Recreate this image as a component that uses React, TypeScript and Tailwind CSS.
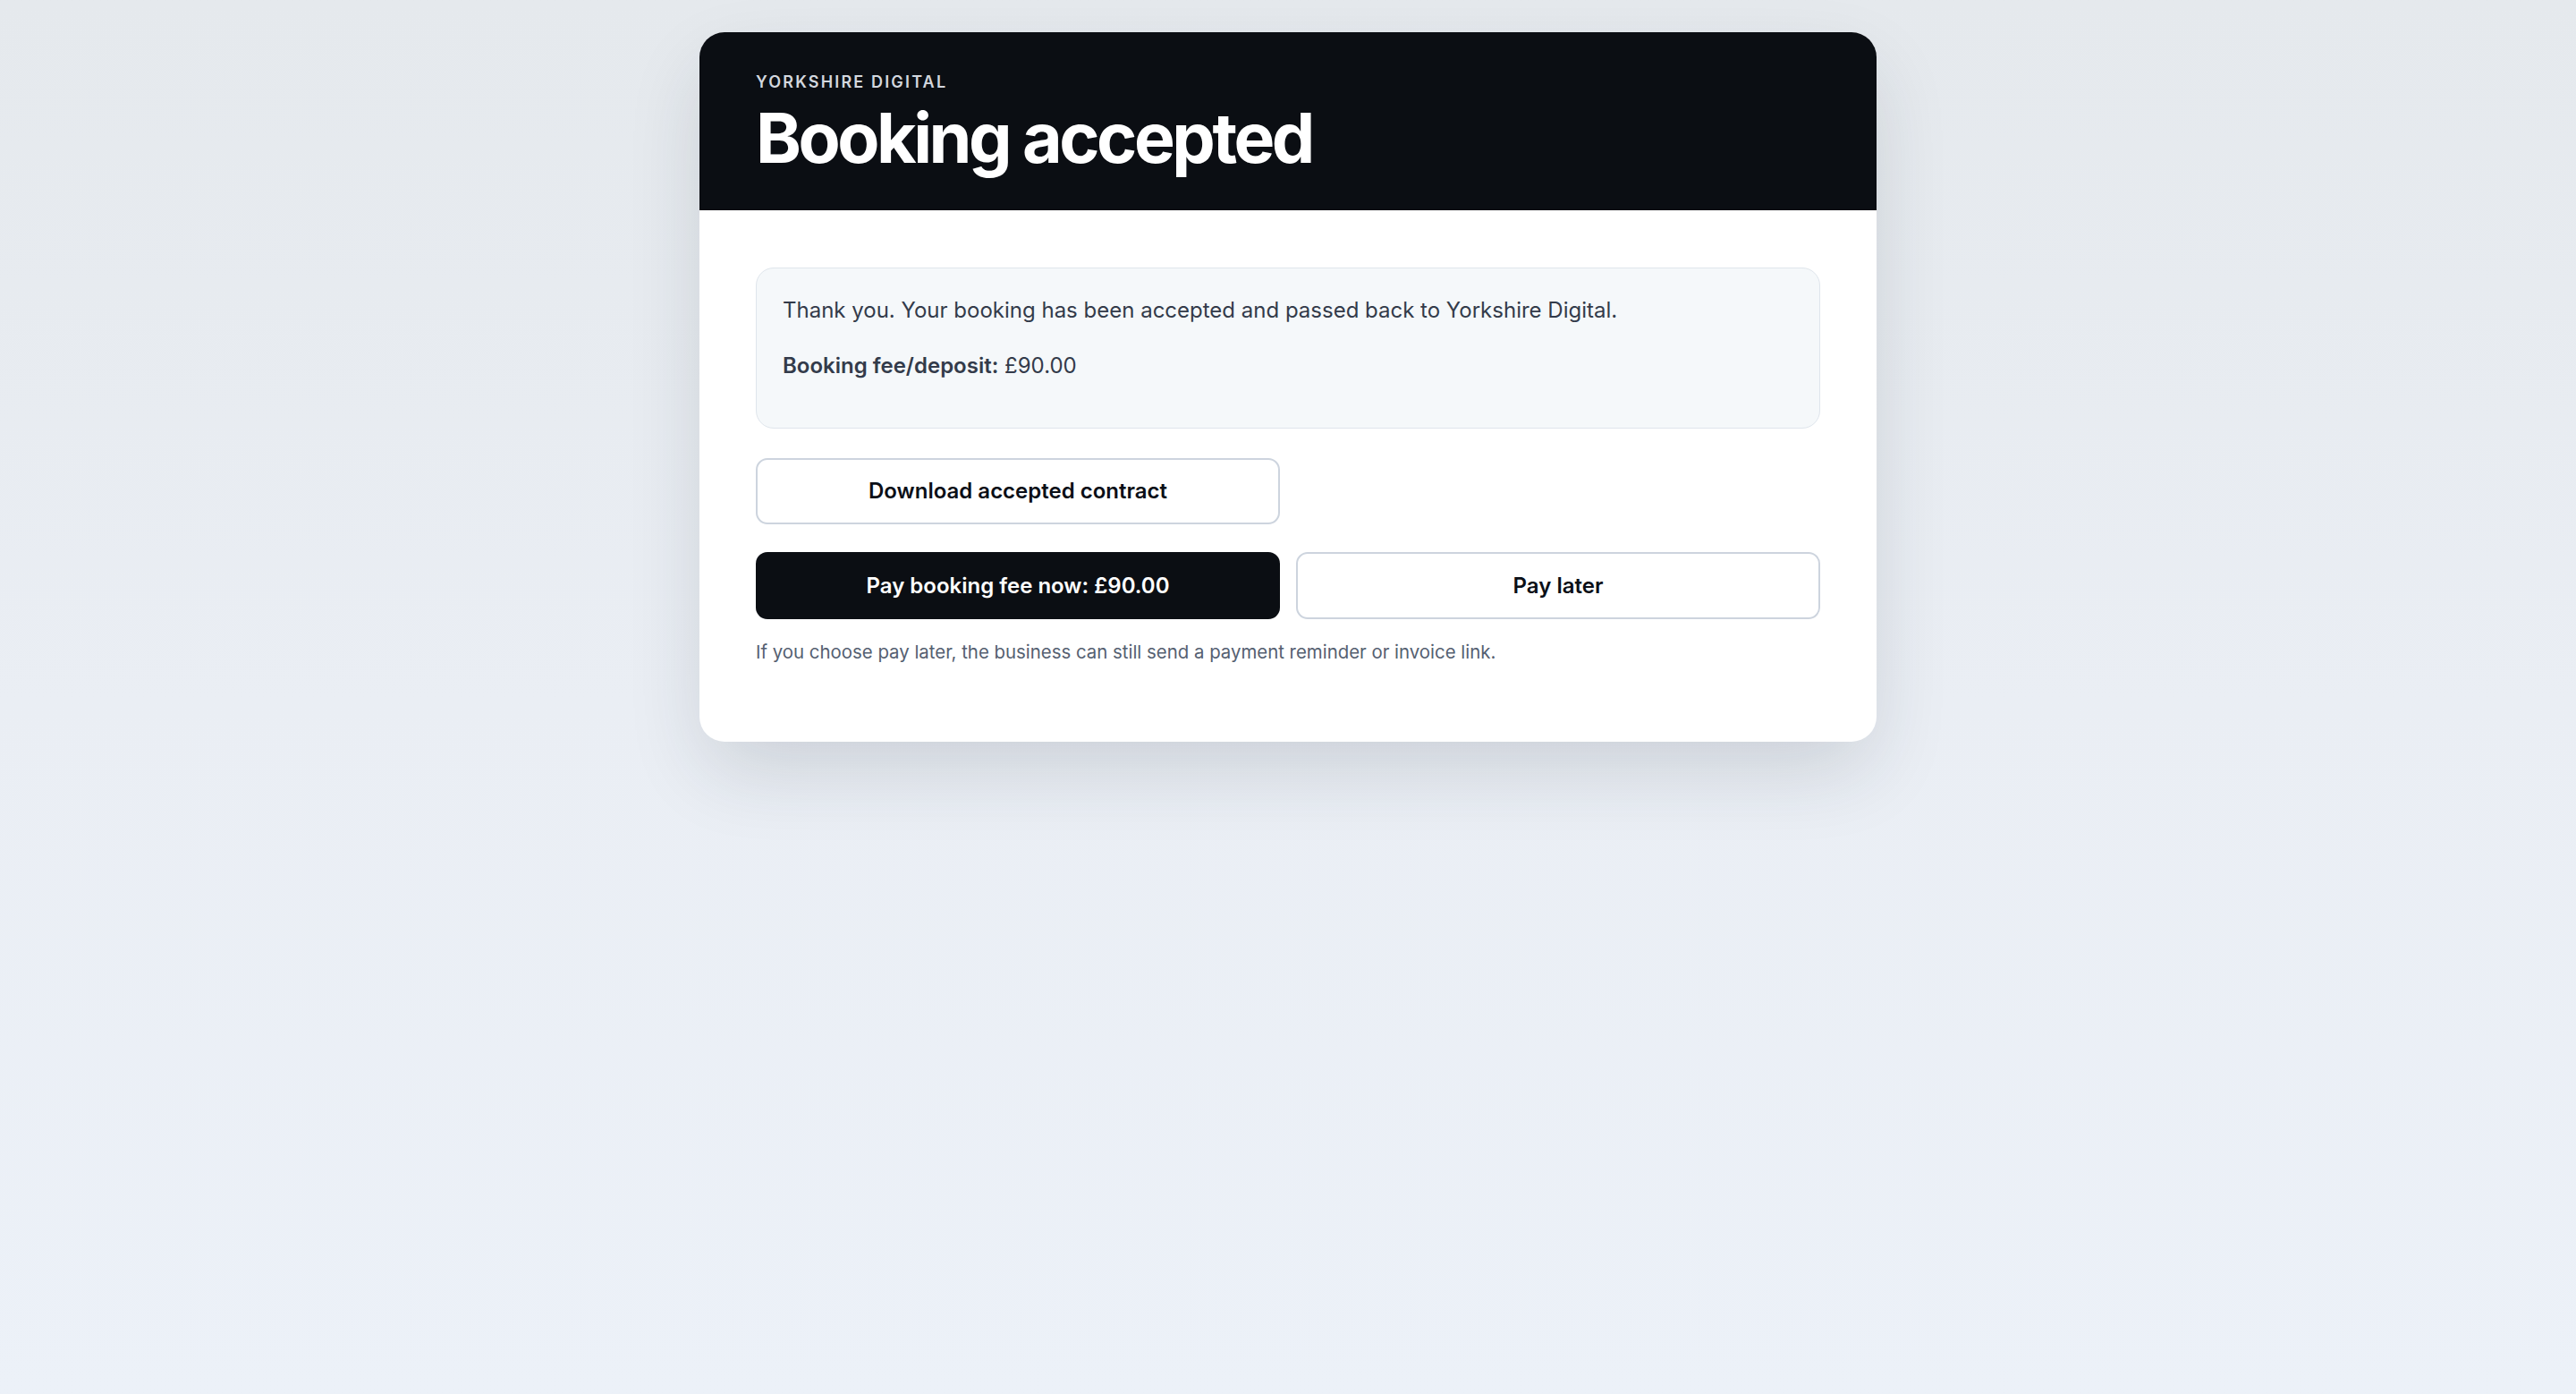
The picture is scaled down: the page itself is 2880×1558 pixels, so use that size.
import React from "react";

export default function App() {
  return (
    <div
      className="min-h-screen w-full bg-gradient-to-b from-[#e5e9ed] via-[#eaeef4] to-[#ecf1f8] pt-[36px]"
      style={{ fontFamily: "Inter, 'Noto Sans', sans-serif" }}
    >
      <div className="mx-auto w-[1316px] overflow-hidden rounded-[28px] bg-white shadow-[0_36px_90px_-10px_rgba(30,41,59,0.16)]">
        <div className="bg-[#0b0e13] px-[63px] pt-[44px] pb-[42px]">
          <div className="text-[18px] leading-[24px] font-semibold tracking-[0.12em] text-[#d3d7de]">
            YORKSHIRE DIGITAL
          </div>
          <h1 className="mt-[12px] text-[77px] leading-[77px] font-bold tracking-[-0.045em] text-white">
            Booking accepted
          </h1>
        </div>
        <div className="px-[63px] pt-[64px] pb-[63px]">
          <div className="flex flex-col gap-[26px] rounded-[20px] border border-[#dfe5ec] bg-[#f5f8fa] px-[29px] pt-[29px] pb-[51px] text-[24px] leading-[36px] text-[#333b4a]">
            <p>Thank you. Your booking has been accepted and passed back to Yorkshire Digital.</p>
            <p>
              <span className="font-semibold">Booking fee/deposit:</span> £90.00
            </p>
          </div>
          <div className="mt-[33px] grid grid-cols-2 gap-[18px]">
            <button className="h-[74px] rounded-[13px] border-2 border-[#cdd4de] bg-white text-[24px] font-semibold text-[#0b0f17]">
              Download accepted contract
            </button>
          </div>
          <div className="mt-[31px] grid grid-cols-2 gap-[18px]">
            <button className="h-[75px] rounded-[13px] bg-[#0b0e13] text-[24px] font-semibold text-white">
              Pay booking fee now: £90.00
            </button>
            <button className="h-[75px] rounded-[13px] border-2 border-[#cdd4de] bg-white text-[24px] font-semibold text-[#0b0f17]">
              Pay later
            </button>
          </div>
          <p className="mt-[22px] mb-[22px] text-[20.4px] leading-[30px] text-[#556071]">
            If you choose pay later, the business can still send a payment reminder or invoice link.
          </p>
        </div>
      </div>
    </div>
  );
}
